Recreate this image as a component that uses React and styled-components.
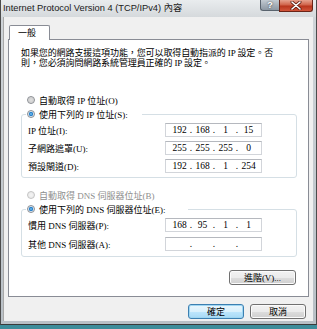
import React from 'react'
import styled, { createGlobalStyle } from 'styled-components'

const GlobalStyle = createGlobalStyle`
  html, body { margin: 0; padding: 0; }
  body {
    background: #3d8c9a;
    width: 317px;
    height: 329px;
    overflow: hidden;
  }
`

const MING = `"Liberation Serif", "Noto Sans CJK TC", serif`

const ipData = [
  { label: 'IP 位址(I):', parts: ['192', '168', '1', '15'] },
  { label: '子網路遮罩(U):', parts: ['255', '255', '255', '0'] },
  { label: '預設閘道(D):', parts: ['192', '168', '1', '254'] },
]

const dnsData = [
  { label: '慣用 DNS 伺服器(P):', parts: ['168', '95', '1', '1'] },
  { label: '其他 DNS 伺服器(A):', parts: ['', '', '', ''] },
]

const IpField = ({ parts }) => (
  <IpBox>
    {parts.map((p, i) => (
      <React.Fragment key={i}>
        {i > 0 && <Dot>.</Dot>}
        <Seg>{p}</Seg>
      </React.Fragment>
    ))}
  </IpBox>
)

const App = () => {
  return (
    <>
      <GlobalStyle />
      <Window>
        <TitleBar>
          <Title>Internet Protocol Version 4 (TCP/IPv4) 內容</Title>
          <Caption>
            <HelpBtn>?</HelpBtn>
            <CloseBtn>
              <svg width="12" height="9" viewBox="0 0 12 9">
                <path d="M2 1 L10 8 M10 1 L2 8" stroke="#5a1a10" strokeWidth="3" strokeLinecap="round" />
                <path d="M2 1 L10 8 M10 1 L2 8" stroke="#ffffff" strokeWidth="1.6" strokeLinecap="round" />
              </svg>
            </CloseBtn>
          </Caption>
        </TitleBar>
        <Client>
          <Tabs>
            <Tab>一般</Tab>
          </Tabs>
          <Panel>
            <Intro>
              如果您的網路支援這項功能，您可以取得自動指派的 IP 設定。否
              <br />
              則，您必須詢問網路系統管理員正確的 IP 設定。
            </Intro>

            <RadioRow $top={26}>
              <Radio />
              <span>自動取得 IP 位址(O)</span>
            </RadioRow>
            <Group $top={2} $bottom={4}>
              <Legend $gap={14}>
                <Radio $checked />
                <span>使用下列的 IP 位址(S):</span>
              </Legend>
              <Rows $gap={4}>
                {ipData.map((r) => (
                  <FieldRow key={r.label}>
                    <Label>{r.label}</Label>
                    <IpField parts={r.parts} />
                  </FieldRow>
                ))}
              </Rows>
            </Group>

            <RadioRow $top={11} $disabled>
              <Radio $disabled />
              <span>自動取得 DNS 伺服器位址(B)</span>
            </RadioRow>
            <Group $top={2} $bottom={5}>
              <Legend $gap={22}>
                <Radio $checked />
                <span>使用下列的 DNS 伺服器位址(E):</span>
              </Legend>
              <Rows $gap={5}>
                {dnsData.map((r) => (
                  <FieldRow key={r.label}>
                    <Label>{r.label}</Label>
                    <IpField parts={r.parts} />
                  </FieldRow>
                ))}
              </Rows>
            </Group>

            <AdvancedRow>
              <Button $w={67}>進階(V)...</Button>
            </AdvancedRow>
          </Panel>
          <Footer>
            <Button $w={56} $default>確定</Button>
            <Button $w={56}>取消</Button>
          </Footer>
        </Client>
      </Window>
    </>
  )
}

export default App

const Window = styled.div`
  width: 317px;
  height: 325px;
  box-sizing: border-box;
  display: flex;
  flex-direction: column;
  background: linear-gradient(180deg, #e4e7ea 0%, #cfd4d8 6%, #b9c0c6 100%);
  border-left: 1px solid #4c4c4c;
  border-right: 1px solid #4c4c4c;
  border-bottom: 1px solid #3a3a3a;
`

const TitleBar = styled.div`
  height: 17px;
  flex-shrink: 0;
  display: flex;
  justify-content: space-between;
  align-items: flex-start;
  background: linear-gradient(180deg, #e9ecee 0%, #d5d9dc 100%);
`

const Title = styled.div`
  font-family: "Liberation Sans", "Noto Sans CJK TC", sans-serif;
  font-size: 9.3px;
  color: #1a1a1a;
  line-height: 17px;
  padding-left: 2px;
  white-space: nowrap;
`

const Caption = styled.div`
  display: flex;
  margin-right: 3px;
`

const HelpBtn = styled.div`
  width: 19px;
  height: 11px;
  box-sizing: border-box;
  border: 1px solid #59636d;
  border-top: none;
  border-right: none;
  border-radius: 0 0 0 3px;
  background: linear-gradient(180deg, #c3cbd2 0%, #a6b0b9 50%, #8d98a3 100%);
  color: #fff;
  font-family: "Liberation Sans", sans-serif;
  font-weight: bold;
  font-size: 9px;
  line-height: 10px;
  text-align: center;
  text-shadow: 0 0 2px #333;
`

const CloseBtn = styled.div`
  width: 34px;
  height: 12px;
  box-sizing: border-box;
  border: 1px solid #6b2417;
  border-top: none;
  border-radius: 0 0 3px 0;
  background: linear-gradient(180deg, #e6a28f 0%, #d0634a 45%, #b8351d 55%, #d2553a 100%);
  display: flex;
  align-items: center;
  justify-content: center;
`

const Client = styled.div`
  flex: 1;
  display: flex;
  flex-direction: column;
  background: #f0f0f0;
  margin: 0 3px 3px 2px;
  border-left: 1px solid #a8a8a8;
  padding: 8px 4px 0 4px;
  font-family: ${MING};
  font-size: 9px;
  color: #000;
`

const Tabs = styled.div`
  display: flex;
  padding-left: 1px;
  position: relative;
  z-index: 1;
  margin-bottom: -1px;
`

const Tab = styled.div`
  width: 41px;
  height: 15px;
  box-sizing: border-box;
  background: #fff;
  border: 1px solid #898c95;
  border-bottom: none;
  border-radius: 2px 2px 0 0;
  padding-left: 8px;
  line-height: 14px;
  font-size: 9px;
`

const Panel = styled.div`
  height: 258px;
  box-sizing: border-box;
  background: #fff;
  border: 1px solid #898c95;
  padding: 8px 11px 0 12px;
  display: flex;
  flex-direction: column;
`

const Intro = styled.div`
  line-height: 10px;
  white-space: nowrap;
  letter-spacing: -0.1px;
`

const RadioRow = styled.div`
  display: flex;
  align-items: center;
  height: 12px;
  margin-top: ${(p) => p.$top}px;
  padding-left: 6px;
  gap: 4px;
  color: ${(p) => (p.$disabled ? '#8d8d8d' : '#000')};
`

const Radio = styled.span`
  width: 8px;
  height: 8px;
  flex-shrink: 0;
  box-sizing: border-box;
  border-radius: 50%;
  border: 1px solid ${(p) => (p.$disabled ? '#c4c4c4' : '#8a8e93')};
  background: ${(p) =>
    p.$checked
      ? 'radial-gradient(circle, #7cc8f4 0%, #1c76c4 45%, #d8e4ee 55%, #f4f4f4 100%)'
      : p.$disabled
      ? 'radial-gradient(circle, #f4f4f4 0%, #e6e6e6 100%)'
      : 'radial-gradient(circle, #e0e0e0 0%, #d2d2d2 50%, #f2f2f2 100%)'};
`

const Group = styled.fieldset`
  margin: ${(p) => p.$top}px 0 0 0;
  padding: 3px 34px ${(p) => p.$bottom}px 6px;
  border: 1px solid #d5dfe5;
  border-radius: 3px;
  min-width: 0;
`

const Legend = styled.legend`
  display: flex;
  align-items: center;
  height: 12px;
  gap: 4px;
  margin-left: -2px;
  padding: 0 ${(p) => p.$gap}px 0 1px;
  white-space: nowrap;
`

const Rows = styled.div`
  display: flex;
  flex-direction: column;
  gap: ${(p) => p.$gap}px;
`

const FieldRow = styled.div`
  display: flex;
  align-items: center;
  justify-content: space-between;
  height: 14px;
`

const Label = styled.span`
  white-space: nowrap;
`

const IpBox = styled.div`
  width: 97px;
  height: 14px;
  box-sizing: border-box;
  border: 1px solid #d2d5da;
  border-top-color: #b5b8be;
  background: #fff;
  display: flex;
  align-items: center;
  padding-left: 4px;
  font-family: "Liberation Serif", serif;
  font-size: 9.5px;
  color: #000;
`

const Seg = styled.span`
  width: 19px;
  text-align: center;
`

const Dot = styled.span`
  width: 4px;
  text-align: center;
`

const AdvancedRow = styled.div`
  display: flex;
  justify-content: flex-end;
  margin-top: 13px;
  padding-right: 1px;
`

const Button = styled.div`
  width: ${(p) => p.$w}px;
  height: 15px;
  box-sizing: border-box;
  border: 1px solid ${(p) => (p.$default ? '#3c7fb1' : '#707070')};
  border-radius: 3px;
  background: ${(p) =>
    p.$default
      ? 'linear-gradient(180deg, #eaf6fd 0%, #d9f0fc 50%, #bee6fd 51%, #a7d9f5 100%)'
      : 'linear-gradient(180deg, #f2f2f2 0%, #ebebeb 50%, #dddddd 51%, #cfcfcf 100%)'};
  box-shadow: ${(p) => (p.$default ? 'inset 0 0 0 1px #9fd6f2' : 'inset 0 0 0 1px #fbfbfb')};
  display: flex;
  align-items: center;
  justify-content: center;
  font-size: 9px;
  color: #000;
  white-space: nowrap;
`

const Footer = styled.div`
  display: flex;
  justify-content: flex-end;
  gap: 6px;
  margin-top: 7px;
  padding-right: 3px;
`
